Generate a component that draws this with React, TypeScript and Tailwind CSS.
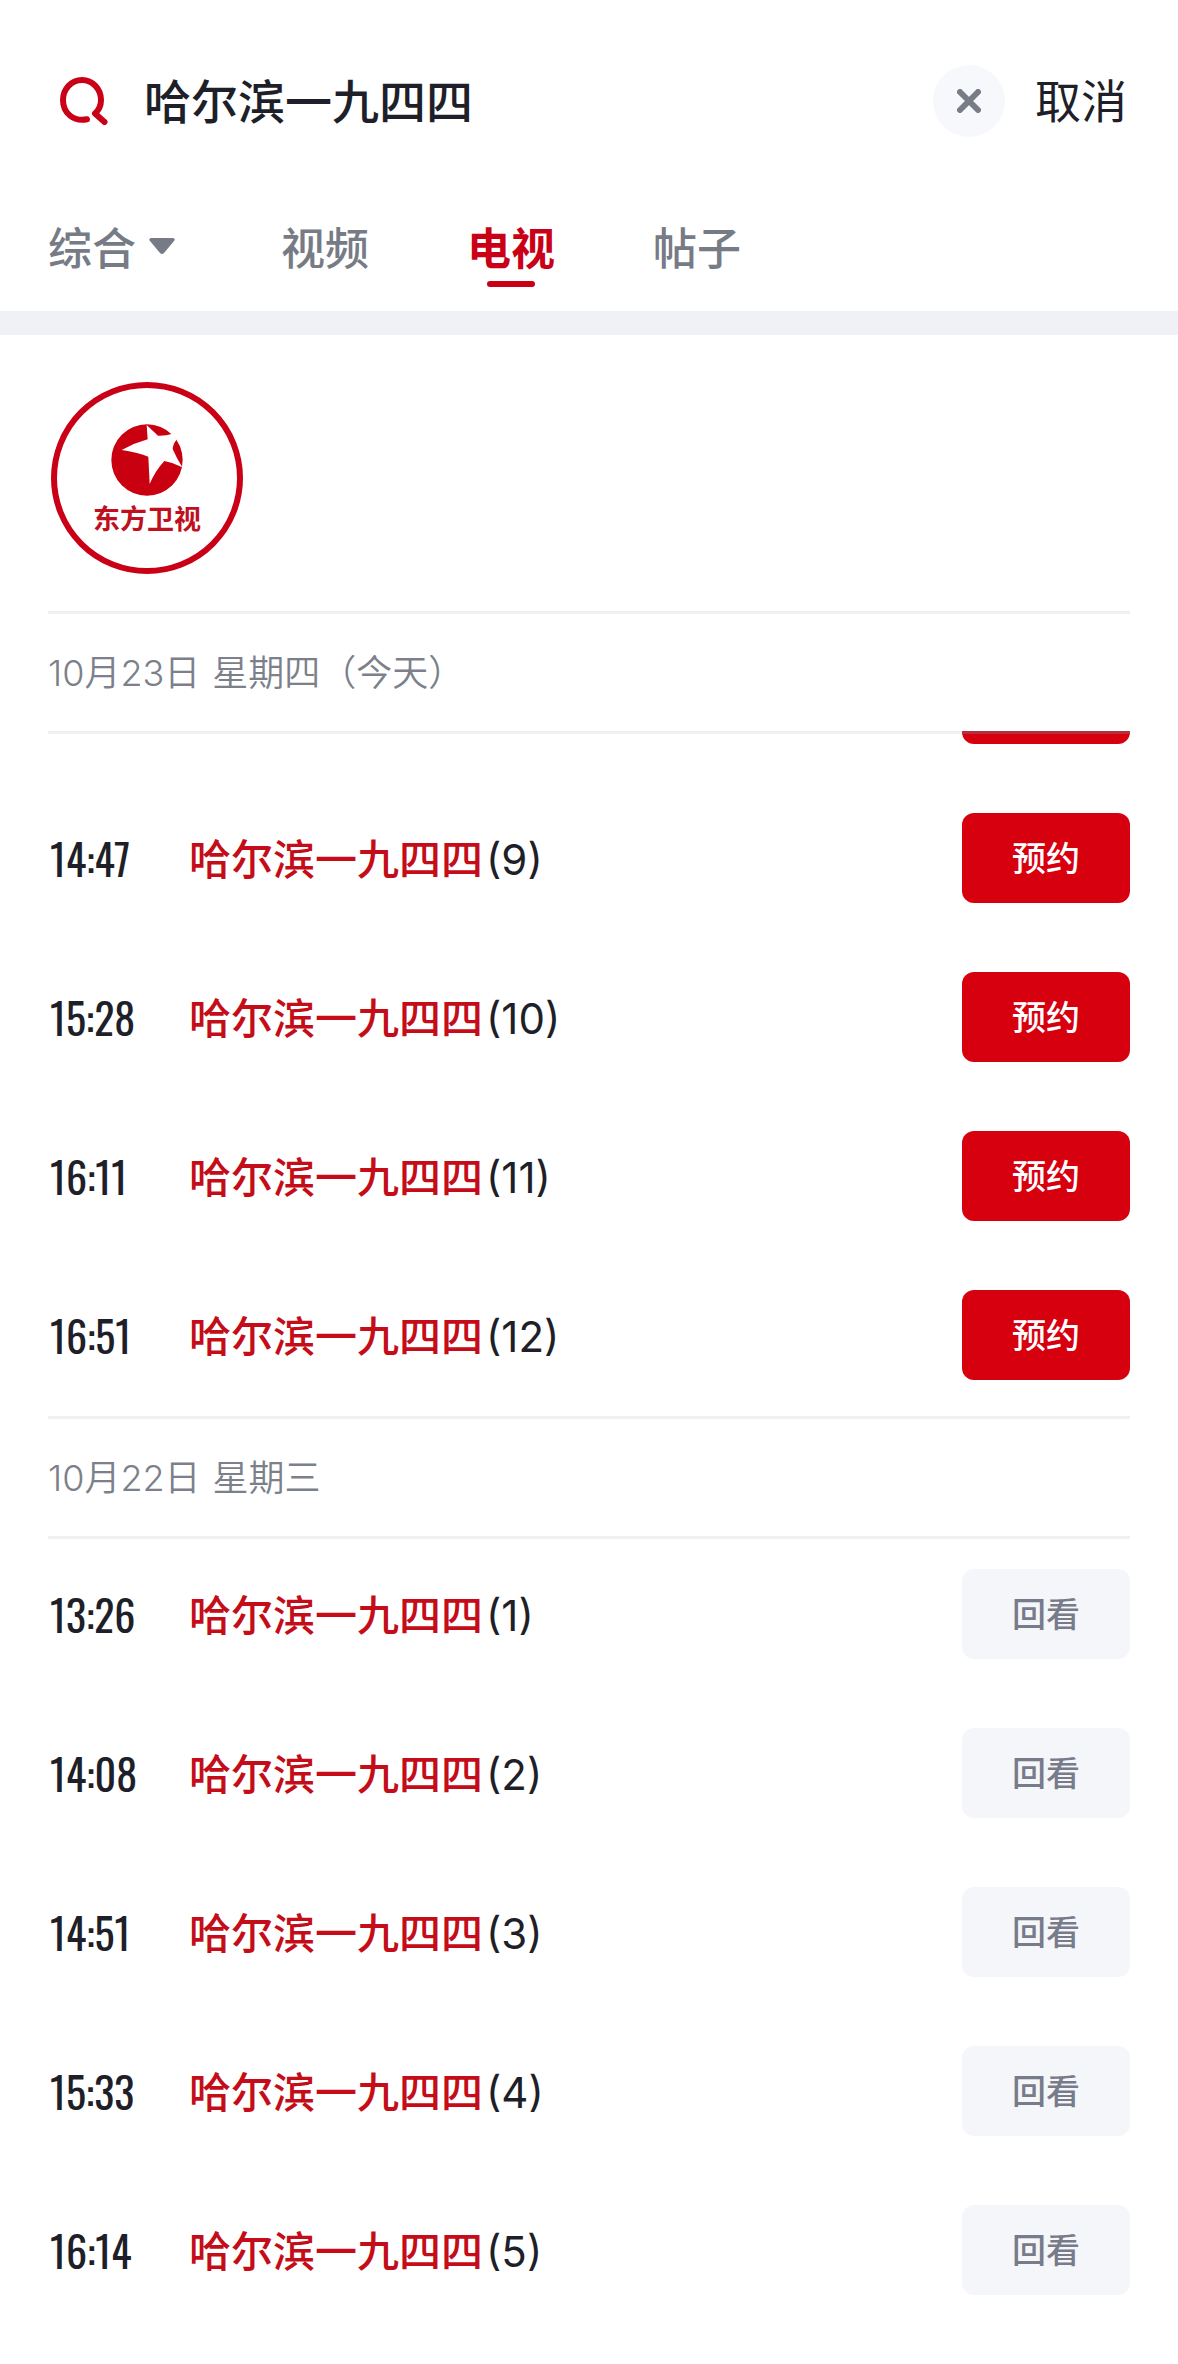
import React from 'react';

interface Programme {
  time: string;
  episode: number;
}

const KEYWORD = '哈尔滨一九四四';

const today: Programme[] = [
  { time: '14:47', episode: 9 },
  { time: '15:28', episode: 10 },
  { time: '16:11', episode: 11 },
  { time: '16:51', episode: 12 },
];

const yesterday: Programme[] = [
  { time: '13:26', episode: 1 },
  { time: '14:08', episode: 2 },
  { time: '14:51', episode: 3 },
  { time: '15:33', episode: 4 },
  { time: '16:14', episode: 5 },
];

const SearchIcon = () => (
  <svg viewBox="0 0 48 48" className="h-12 w-12 shrink-0" fill="none" stroke="#c90016" strokeWidth="6" strokeLinecap="round" strokeLinejoin="round">
    <path d="M27 42.300C14 45 3 36.500 3 23C3 12 11.500 3 22 3C32.500 3 41 12 41 23C41 28.500 39.500 32.500 35 36.500L44.500 45" />
  </svg>
);

const ChannelLogo = () => (
  <a href="#dragon-tv" className="flex h-48 w-48 flex-col items-center rounded-full border-[6px] border-[#c90016] pt-9 text-[#c01020]">
    <svg viewBox="245 192 216 216" className="h-18 w-18">
      <circle cx="353" cy="300" r="107" fill="#c9000f" />
      <path d="M352 195L386 227Q408 228 430 221L442 239Q431 251 430 267Q441 293 459 322Q434 308 405 303Q378 332 361 372Q359 330 357 290Q322 276 277 270Q315 249 355 238Z" fill="#fff" />
    </svg>
    <span className="mt-1 text-[27px] leading-9 font-bold">东方卫视</span>
  </a>
);

interface DateHeaderProps {
  date: string;
  weekday: string;
}

const DateHeader: React.FC<DateHeaderProps> = ({ date, weekday }) => (
  <h2 className="flex gap-3 border-y-[3px] border-[#f0f0f2] pt-[37px] pb-[35px] font-['Inter','Noto_Sans_CJK_SC',sans-serif] text-[36px] leading-[45px] font-[350] text-[#7c808a]">
    <span>{date}</span>
    <span>{weekday}</span>
  </h2>
);

interface ProgrammeListProps {
  items: Programme[];
  upcoming?: boolean;
}

const ProgrammeList: React.FC<ProgrammeListProps> = ({ items, upcoming = false }) => (
  <ul className="flex flex-col gap-[69px]">
    {items.map((item) => (
      <li key={item.time} className="flex items-center">
        <time className="w-[141px] pl-[2px] font-['Oswald','Roboto',sans-serif] text-[42px] leading-[60px]">
          {item.time}
        </time>
        <p className="flex flex-1 items-baseline gap-[3px] text-[42px] leading-[60px]">
          <span className="font-medium text-[#c40d18]">{KEYWORD}</span>
          <span className="font-['Inter',sans-serif]">({item.episode})</span>
        </p>
        <button
          className={
            upcoming
              ? 'h-[90px] w-[168px] rounded-xl bg-[#d7000f] pb-[3px] text-[34px] font-medium text-white'
              : 'h-[90px] w-[168px] rounded-xl bg-[#f5f6fa] pb-[3px] text-[34px] font-medium text-[#787b89]'
          }
        >
          {upcoming ? '预约' : '回看'}
        </button>
      </li>
    ))}
  </ul>
);

const App: React.FC = () => {
  return (
    <div className="min-h-screen bg-white pb-[69px] font-['Noto_Sans_CJK_SC',sans-serif] text-[#1e1f29]">
      <header>
        <form className="flex items-center pt-[65px] pr-[51px] pl-15" onSubmit={(e) => e.preventDefault()}>
          <SearchIcon />
          <input
            type="text"
            aria-label="搜索"
            defaultValue={KEYWORD}
            className="ml-9 h-[72px] min-w-0 flex-1 pb-[5px] text-[47px] font-medium outline-none"
          />
          <button type="button" aria-label="清除" className="flex h-18 w-18 items-center justify-center rounded-full bg-[#f7f8fb]">
            <svg viewBox="0 0 24 24" className="h-6 w-6" stroke="#787c86" strokeWidth="6" strokeLinecap="round">
              <path d="M3 3L21 21M21 3L3 21" />
            </svg>
          </button>
          <button type="button" className="ml-[30px] pb-[5px] text-[46px] leading-[67px]">取消</button>
        </form>

        <nav className="flex h-[174px] items-start gap-[98px] px-12 pt-[76px] text-[44px] leading-[66px] font-medium text-[#777b86]">
          <button className="mr-2 flex items-center gap-[13px]">
            综合
            <svg viewBox="0 0 26 16" className="h-4 w-[26px]" fill="currentColor">
              <path d="M2 0H24Q27 1 25 3L15 15Q13 17 11 15L1 3Q-1 1 2 0Z" />
            </svg>
          </button>
          <button>视频</button>
          <button className="flex flex-col items-center gap-[2px] font-bold text-[#c90016]">
            电视
            <span className="h-[6px] w-12 rounded-full bg-[#c90016]" />
          </button>
          <button>帖子</button>
        </nav>
      </header>

      <div className="h-6 bg-[#eff1f7]" />

      <main className="px-12">
        <div className="pt-[47px] pb-[37px] pl-[3px]">
          <ChannelLogo />
        </div>

        <section>
          <DateHeader date="10月23日" weekday="星期四（今天）" />
          {/* row that has scrolled under the pinned date */}
          <div className="-mt-[3px] ml-auto h-[13px] w-[168px] overflow-hidden rounded-b-xl border-t-[3px] border-[#b5303f] bg-[#d7000f]" />
          <div className="pt-[69px] pb-9">
            <ProgrammeList items={today} upcoming />
          </div>
        </section>

        <section>
          <DateHeader date="10月22日" weekday="星期三" />
          <div className="pt-[30px]">
            <ProgrammeList items={yesterday} />
          </div>
        </section>
      </main>
    </div>
  );
};

export default App;
